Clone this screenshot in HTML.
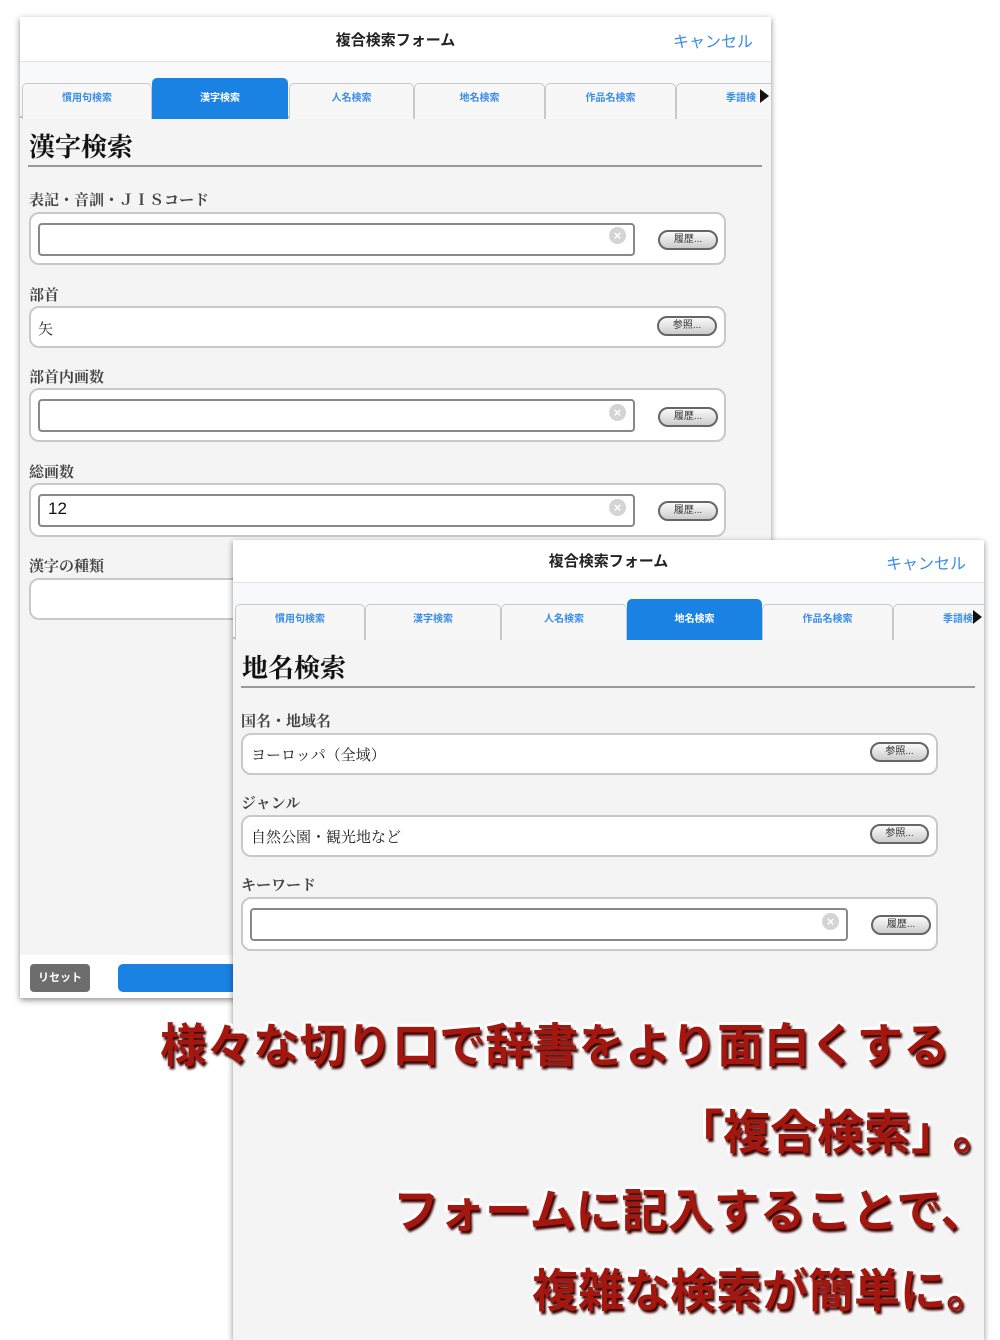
<!DOCTYPE html>
<html><head><meta charset="utf-8"><style>
*{margin:0;padding:0;box-sizing:border-box}
body{width:1000px;height:1334px;background:#fff;position:relative;overflow:hidden;font-family:"Liberation Sans","Noto Sans CJK JP",sans-serif}
.p{position:absolute;background:#f4f4f4;box-shadow:0 2px 6px rgba(0,0,0,.45);overflow:hidden}
.a{position:absolute}
.hd{left:0;top:0;right:0;height:45px;background:#fff;border-bottom:1px solid #e2e2e2}
.ttl{font-size:15px;font-weight:bold;color:#222;text-align:center;width:100%;top:12px}
.cn{font-size:16px;color:#3a8de8;top:11px}
.tb{left:0;right:0;top:45px;height:56px;background:#f8f9fb;border-bottom:2px solid #bbb}
.t{position:absolute;height:36px;top:21px;background:#f7f7f7;border:1px solid #c8c8c8;border-bottom:none;border-radius:5px 5px 0 0;font-size:10px;font-weight:bold;color:#3a8de8;text-align:center;line-height:30px}
.t.on{background:#1a82e2;color:#fff;top:16px;height:41px;line-height:40px;border-color:#1a82e2}
.h1{font-family:"Liberation Serif","Noto Serif CJK SC",serif;font-size:26px;font-weight:bold;color:#111}
.ln{height:2px;background:#999}
.lb{font-family:"Liberation Serif","Noto Serif CJK SC",serif;font-size:15px;font-weight:bold;color:#444}
.bx{background:#fff;border:2px solid #c9c9c9;border-radius:10px}
.fd{background:#fff;border:2px solid #888;border-radius:4px}
.x{width:17px;height:17px;border-radius:50%;background:#d4d4d4;color:#fff;font-size:13px;line-height:17px;text-align:center;font-weight:bold}
.bt{height:20px;border:2px solid #666;border-radius:10px;background:linear-gradient(#fafafa,#ccc);font-size:10px;color:#333;text-align:center;line-height:16px}
.vt{font-family:"Liberation Serif","Noto Serif CJK SC",serif;font-size:15px;color:#222}
.big{position:absolute;font-family:"Noto Sans CJK JP",sans-serif;font-weight:700;color:#a3170f;white-space:nowrap;
text-shadow:2px 3px 2px #3a0000,-2px -2px 0 #fff,2px -2px 0 #fff,-2px 2px 0 #fff,2px 2px 0 #fff,0 -3px 0 #fff,0 3px 0 #fff,-3px 0 0 #fff,3px 0 0 #fff}
</style></head><body>

<!-- Panel 1 -->
<div class="p" style="left:20px;top:17px;width:751px;height:981px">
 <div class="a hd"></div>
 <div class="a ttl">複合検索フォーム</div>
 <div class="a cn" style="left:653px">キャンセル</div>
 <div class="a tb">
  <div class="t" style="left:2px;width:130px">慣用句検索</div>
  <div class="t on" style="left:132px;width:136px">漢字検索</div>
  <div class="t" style="left:269px;width:125px">人名検索</div>
  <div class="t" style="left:394px;width:131px">地名検索</div>
  <div class="t" style="left:525px;width:131px">作品名検索</div>
  <div class="t" style="left:656px;width:100px;padding-left:30px">季語検</div>
  <div class="a" style="left:740px;top:27px;width:0;height:0;border-top:7px solid transparent;border-bottom:7px solid transparent;border-left:9px solid #111"></div>
 </div>
 <div class="a h1" style="left:9px;top:110px">漢字検索</div>
 <div class="a ln" style="left:8px;top:148px;width:734px"></div>
 <div class="a lb" style="left:9px;top:172px">表記・音訓・ＪＩＳコード</div>
 <div class="a bx" style="left:9px;top:195px;width:697px;height:53px"></div>
 <div class="a fd" style="left:18px;top:206px;width:597px;height:33px"></div>
 <div class="a x" style="left:589px;top:210px">×</div>
 <div class="a bt" style="left:638px;top:213px;width:60px">履歴...</div>
 <div class="a lb" style="left:9px;top:267px">部首</div>
 <div class="a bx" style="left:9px;top:289px;width:697px;height:42px"></div>
 <div class="a vt" style="left:18px;top:301px">矢</div>
 <div class="a bt" style="left:637px;top:299px;width:60px">参照...</div>
 <div class="a lb" style="left:9px;top:349px">部首内画数</div>
 <div class="a bx" style="left:9px;top:371px;width:697px;height:54px"></div>
 <div class="a fd" style="left:18px;top:382px;width:597px;height:33px"></div>
 <div class="a x" style="left:589px;top:387px">×</div>
 <div class="a bt" style="left:638px;top:390px;width:60px">履歴...</div>
 <div class="a lb" style="left:9px;top:444px">総画数</div>
 <div class="a bx" style="left:9px;top:466px;width:697px;height:54px"></div>
 <div class="a fd" style="left:18px;top:477px;width:597px;height:33px"></div>
 <div class="a" style="left:28px;top:482px;font-size:17px;color:#111">12</div>
 <div class="a x" style="left:589px;top:482px">×</div>
 <div class="a bt" style="left:638px;top:484px;width:60px">履歴...</div>
 <div class="a lb" style="left:9px;top:538px">漢字の種類</div>
 <div class="a bx" style="left:9px;top:561px;width:697px;height:42px"></div>
 <div class="a" style="left:0;top:938px;width:751px;height:43px;background:#fff"></div>
 <div class="a" style="left:10px;top:947px;width:60px;height:28px;border-radius:4px;background:#6d6d6d;color:#fff;font-size:11px;font-weight:bold;text-align:center;line-height:28px">リセット</div>
 <div class="a" style="left:98px;top:947px;width:500px;height:28px;border-radius:5px;background:#1a82e2"></div>
</div>

<!-- Panel 2 -->
<div class="p" style="left:233px;top:540px;width:751px;height:800px">
 <div class="a hd" style="height:43px"></div>
 <div class="a ttl" style="top:10px">複合検索フォーム</div>
 <div class="a cn" style="left:653px;top:10px">キャンセル</div>
 <div class="a tb" style="top:43px">
  <div class="t" style="left:2px;width:130px">慣用句検索</div>
  <div class="t" style="left:132px;width:136px">漢字検索</div>
  <div class="t" style="left:268px;width:126px">人名検索</div>
  <div class="t on" style="left:394px;width:135px">地名検索</div>
  <div class="t" style="left:529px;width:131px">作品名検索</div>
  <div class="t" style="left:660px;width:100px;padding-left:30px">季語検</div>
  <div class="a" style="left:740px;top:27px;width:0;height:0;border-top:7px solid transparent;border-bottom:7px solid transparent;border-left:9px solid #111"></div>
 </div>
 <div class="a h1" style="left:9px;top:108px">地名検索</div>
 <div class="a ln" style="left:8px;top:146px;width:734px"></div>
 <div class="a lb" style="left:8px;top:170px">国名・地域名</div>
 <div class="a bx" style="left:8px;top:193px;width:697px;height:42px"></div>
 <div class="a vt" style="left:18px;top:204px">ヨーロッパ（全域）</div>
 <div class="a bt" style="left:637px;top:202px;width:59px">参照...</div>
 <div class="a lb" style="left:8px;top:252px">ジャンル</div>
 <div class="a bx" style="left:8px;top:275px;width:697px;height:42px"></div>
 <div class="a vt" style="left:18px;top:286px">自然公園・観光地など</div>
 <div class="a bt" style="left:637px;top:284px;width:59px">参照...</div>
 <div class="a lb" style="left:8px;top:334px">キーワード</div>
 <div class="a bx" style="left:8px;top:357px;width:697px;height:54px"></div>
 <div class="a fd" style="left:17px;top:368px;width:598px;height:33px"></div>
 <div class="a x" style="left:589px;top:373px">×</div>
 <div class="a bt" style="left:638px;top:375px;width:60px">履歴...</div>
</div>

<div class="big" style="left:160px;top:1009px;font-size:46.5px">様々な切り口で辞書をより面白くする</div>
<div class="big" style="left:676px;top:1094px;font-size:47px">「複合検索」<span style="margin-left:18px">。</span></div>
<div class="big" style="left:393px;top:1175px;font-size:46px">フォームに記入することで、</div>
<div class="big" style="left:532px;top:1255px;font-size:46px">複雑な検索が簡単に。</div>
</body></html>
